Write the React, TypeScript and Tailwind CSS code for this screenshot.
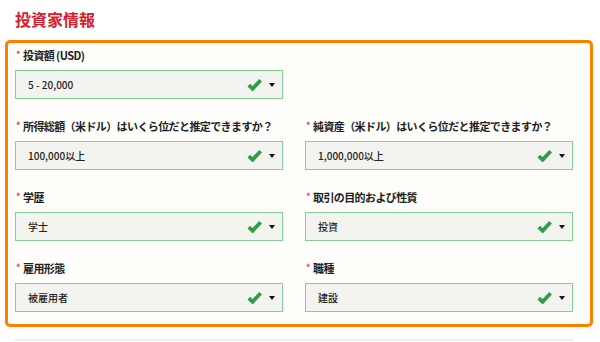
const FIELDS: { label: string; value: string }[][] = [
    [{ label: "投資額 (USD)", value: "5 - 20,000" }],
    [
        { label: "所得総額（米ドル）はいくら位だと推定できますか？", value: "100,000以上" },
        { label: "純資産（米ドル）はいくら位だと推定できますか？", value: "1,000,000以上" },
    ],
    [
        { label: "学歴", value: "学士" },
        { label: "取引の目的および性質", value: "投資" },
    ],
    [
        { label: "雇用形態", value: "被雇用者" },
        { label: "職種", value: "建設" },
    ],
];

function Check() {
    return (
        <svg width="15" height="13" viewBox="0 0 15 13" className="shrink-0">
            <path d="M1.8 7.2 L5.6 10.8 L13.6 2.2" fill="none" stroke="#2f9e44" strokeWidth="3.8" strokeLinecap="butt" strokeLinejoin="miter" />
        </svg>
    );
}

function Field({ label, value }: { label: string; value: string }) {
    return (
        <div className="flex flex-col">
            <div className="flex items-center h-4 text-[11px] font-bold text-[#1e1e1e] leading-none whitespace-nowrap tracking-[-0.6px]">
                <span className="text-[#e0434b] text-[9px] w-[7px] ml-[1px] -mt-[1px]">*</span>
                <span>{label}</span>
            </div>
            <div className="mt-[7px] h-[29px] flex items-center border border-[#86cf92] bg-[#f3f3ef] pl-[12px] pr-[7px]">
                <span className="flex-1 text-[10px] font-medium text-[#222]">{value}</span>
                <Check />
                <span className="ml-[7px] w-0 h-0 border-l-[3px] border-r-[3px] border-t-[4px] border-l-transparent border-r-transparent border-t-[#111]" />
            </div>
        </div>
    );
}

export default function App() {
    return (
        <div className="w-[600px] h-[342px] bg-white overflow-hidden" style={{ fontFamily: '"Noto Sans CJK JP", "Noto Sans", sans-serif' }}>
            <div className="h-[40px] pl-[15px] pt-[9px]">
                <h2 className="text-[16px] font-bold text-[#d4202c] leading-[20px]">投資家情報</h2>
            </div>
            <div className="ml-[5px] w-[588px] border-[3px] border-[#ff7f00] rounded-[5px] bg-[#fdfdf9] pl-[7px] pr-[17px] pt-[4px] pb-[12px] flex flex-col gap-[19px]">
                {FIELDS.map((row, i) => (
                    <div key={i} className="grid grid-cols-2 gap-[22px]">
                        {row.map(f => <Field key={f.label} {...f} />)}
                    </div>
                ))}
            </div>
            <div className="mt-[12px] mx-[15px] w-[558px] border-t-[2px] border-[#eeeeee]" />
        </div>
    );
}
